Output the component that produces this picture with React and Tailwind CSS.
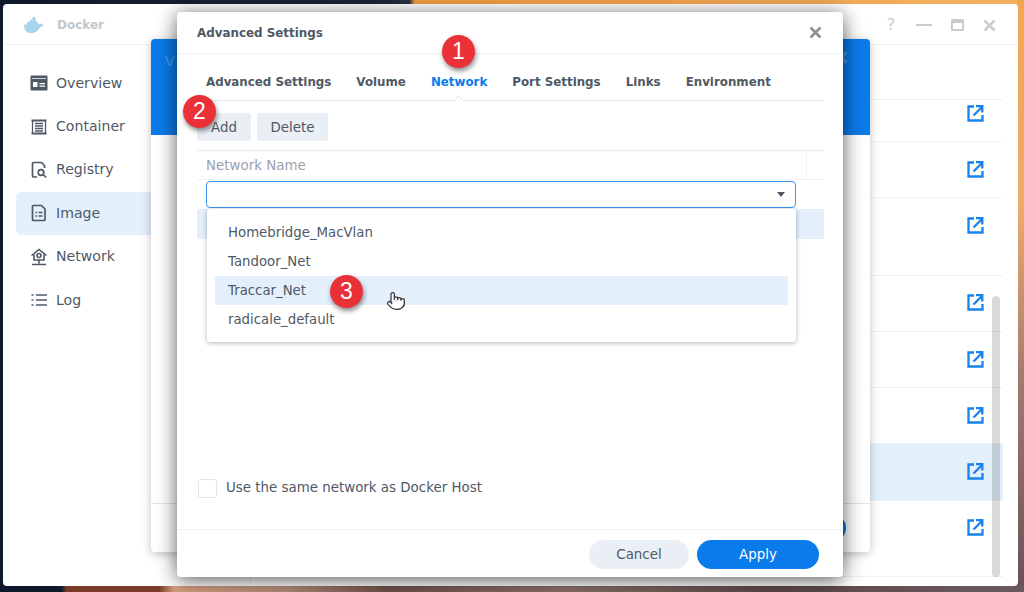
import React from "react";
import { Pointer } from "lucide-react";

const sidebarItems = [
  { label: "Overview", icon: "overview" },
  { label: "Container", icon: "container" },
  { label: "Registry", icon: "registry" },
  { label: "Image", icon: "image", active: true },
  { label: "Network", icon: "network" },
  { label: "Log", icon: "log" },
];

const rows = [
  { h: "h-[42px]", pt: "pt-[4px]" },
  { h: "h-[56px]", pt: "pt-[18px]" },
  { h: "h-[78px]", pt: "pt-[18px]" },
  { h: "h-[56px]", pt: "pt-[17px]" },
  { h: "h-[56px]", pt: "pt-[18px]" },
  { h: "h-[56px]", pt: "pt-[18px]" },
  { h: "h-[57px]", pt: "pt-[18px]", active: true },
  { h: "h-[76px]", pt: "pt-[17px]" },
];

const tabs = ["Advanced Settings", "Volume", "Network", "Port Settings", "Links", "Environment"];
const networks = ["Homebridge_MacVlan", "Tandoor_Net", "Traccar_Net", "radicale_default"];

const SideIcon = ({ name }) => {
  const common = { width: 20, height: 20, viewBox: "0 0 20 20", className: "text-[#4f5965] shrink-0" };
  if (name === "overview")
    return (
      <svg {...common}>
        <path
          fillRule="evenodd"
          fill="currentColor"
          d="M1.500 3.500a1 1 0 0 1 1-1h15a1 1 0 0 1 1 1v13a1 1 0 0 1-1 1h-15a1 1 0 0 1-1-1zM3 5v.8h14V5zM4 9v5h4.500V9zm6.500 1v1.200H16V10zm0 2.500v1.200H16v-1.200z"
        />
      </svg>
    );
  if (name === "container")
    return (
      <svg {...common} fill="none" stroke="currentColor" strokeWidth="1.300">
        <path strokeWidth="1.800" d="M2.500 3.500h15M2.500 16.500h15" />
        <path d="M3.500 3.500v13M16.500 3.500v13M6 6.500h8M6 9h8M6 11.500h8M6 14h8" />
      </svg>
    );
  if (name === "registry")
    return (
      <svg {...common} fill="none" stroke="currentColor" strokeWidth="1.700">
        <path d="M8 17H4.500a1 1 0 0 1-1-1V3.500a1 1 0 0 1 1-1h8l3 3V8" />
        <circle cx="12" cy="12.500" r="2.800" />
        <path d="m14.200 14.700 3 2.800" />
      </svg>
    );
  if (name === "image")
    return (
      <svg {...common} fill="none" stroke="currentColor" strokeWidth="1.700">
        <path d="M4.500 2.500h8l3.500 3.500v10.500a1 1 0 0 1-1 1H4.500a1 1 0 0 1-1-1v-13a1 1 0 0 1 1-1z" />
        <path strokeWidth="1.400" d="M6.500 9.500h1.500M9.500 9.500h4M6.500 13h1.500M9.500 13h4" />
      </svg>
    );
  if (name === "network")
    return (
      <svg {...common} fill="none" stroke="currentColor" strokeWidth="1.600">
        <path d="M2.500 8.500 10 2.500l7.500 6" />
        <path d="M5 7.500V13h10V7.500" />
        <circle cx="10" cy="8.500" r="2" />
        <path d="M10 13v3.500M3 17.500h14" />
      </svg>
    );
  return (
    <svg {...common} fill="none" stroke="currentColor" strokeWidth="1.700">
      <path d="M2.500 5h2M7 5h11M2.500 10h2M7 10h11M2.500 15h2M7 15h11" />
    </svg>
  );
};

const OpenIcon = () => (
  <svg width="17" height="18" viewBox="0 0 17 18" fill="none" stroke="#1883ee" strokeWidth="2.300">
    <path d="M7 2.500H1.500v14h14V11" />
    <path d="M6.500 11.500 14.500 3.500M9 2.200h6.300v6.300" />
  </svg>
);

const DockerLogo = () => (
  <svg width="22" height="18" viewBox="0 0 22 18" className="shrink-0">
    <path
      fill="#a9d4f0"
      d="M1 8.500h3V6h3V3.500h2.500V1h3v4l2 .5.500 2.500c2-1 3.500-.8 5.500 1-1 1.500-2 2-3.500 2.200C15.500 15.500 11 17.500 6.500 17 3 16.500 1 13 1 8.500z"
    />
  </svg>
);

const Badge = ({ n, className }) => (
  <div
    className={`absolute w-[33px] h-[33px] rounded-full bg-[#ea3138] text-white flex items-center justify-center text-[23px] shadow-[1px_3px_5px_rgba(0,0,0,0.45)] font-['Liberation_Sans',sans-serif] ${className}`}
  >
    {n}
  </div>
);

const CloseX = ({ className }) => (
  <svg width="13" height="13" viewBox="0 0 13 13" className={className} fill="none" stroke="currentColor" strokeWidth="2.600">
    <path d="m1.500 1.500 10 10M11.500 1.500l-10 10" />
  </svg>
);

const DockerWindow = () => (
  <div className="absolute left-[3px] top-[4px] w-[1015px] h-[582px] bg-white rounded-[4px] flex flex-col overflow-hidden">
    <div className="h-[41px] shrink-0 border-b border-[#eef2f6] flex items-center pl-[20px] pr-[22px] pt-[2px]">
      <DockerLogo />
      <span className="ml-[12px] text-[12px] font-bold text-[#c2c7cc]">Docker</span>
      <div className="ml-auto flex items-center gap-[17px] text-[#c9cdd2]">
        <span className="w-[16px] text-center text-[16px]">?</span>
        <span className="w-[16px] h-[2px] bg-[#c9cdd2]" />
        <span className="w-[13px] h-[12px] mx-[2px] border-2 border-t-[4px] border-[#c9cdd2] rounded-[1px]" />
        <CloseX />
      </div>
    </div>
    <div className="flex-1 flex min-h-0">
      <div className="w-[248px] shrink-0 border-r border-[#eef2f6] pt-[17px] pl-[13px] pr-[14px] flex flex-col gap-[1px]">
        {sidebarItems.map((item) => (
          <div
            key={item.label}
            className={`h-[42.400px] flex items-center gap-[7px] pl-[13px] rounded-[6px] text-[14.100px] text-[#4f5965] ${
              item.active ? "bg-[#e3effb]" : ""
            }`}
          >
            <SideIcon name={item.icon} />
            {item.label}
          </div>
        ))}
      </div>
      <div className="flex-1 pt-[54px] pr-[15px]">
        {rows.map((row, i) => (
          <div
            key={i}
            className={`${row.h} ${row.pt} border-t border-[#eef2f6] flex justify-end pr-[19px] ${
              row.active ? "bg-[#e3effb]" : ""
            }`}
          >
            <OpenIcon />
          </div>
        ))}
        <div className="border-t border-[#eef2f6]" />
      </div>
    </div>
    <div className="absolute left-[989px] top-[292px] w-[8px] h-[281px] rounded-full bg-black/15" />
  </div>
);

const BackDialog = () => (
  <div className="absolute left-[151px] top-[39px] w-[719px] h-[513px] bg-white rounded-[4px] shadow-[0_2px_10px_rgba(0,0,0,0.25)] flex flex-col overflow-hidden">
    <div className="h-[96px] shrink-0 bg-[#0a7bea] flex items-start justify-between pt-[12px] pl-[14px] pr-[22px] text-[14px] text-white/25">
      <span>V</span>
      <CloseX className="text-white/25" />
    </div>
    <div className="flex-1" />
    <div className="h-[49px] shrink-0 border-t border-[#dfe6ee] flex items-start justify-end pt-[10px] pr-[24px]">
      <div className="w-[40px] h-[28px] rounded-full bg-[#0a7bea]" />
    </div>
  </div>
);

const AdvancedDialog = () => (
  <div className="absolute left-[177px] top-[12px] w-[666px] h-[565px] bg-white rounded-[4px] shadow-[0_3px_20px_rgba(0,0,0,0.65)] flex flex-col text-[#4f5965]">
    <div className="h-[42px] shrink-0 border-b border-[#eef2f6] flex items-center justify-between pl-[20px] pr-[21px]">
      <span className="text-[11.900px] font-bold pt-[3px]">Advanced Settings</span>
      <CloseX className="text-[#8a929b]" />
    </div>
    <div className="px-[20px] flex-1 flex flex-col min-h-0">
      <div className="relative h-[47px] shrink-0 border-b border-[#e6ebf1] flex items-center gap-[25px] pl-[9px] mr-[-1px] text-[11.850px] font-bold pt-[11px]">
        {tabs.map((t) => (
          <span key={t} className={t === "Network" ? "text-[#0a7bea]" : ""}>
            {t}
          </span>
        ))}
        <span className="absolute left-[258px] top-[43px] w-[7px] h-[7px] rotate-45 bg-white border-l border-t border-[#e6ebf1]" />
      </div>
      <div className="pt-[12px] h-[50px] shrink-0 border-b border-[#e6ebf1] mr-[-1px] flex gap-[6px] text-[13.400px]">
        <div className="w-[54px] h-[28px] pt-[2px] rounded-[3px] bg-[#e9eff5] flex items-center justify-center">Add</div>
        <div className="w-[71px] h-[28px] pt-[2px] rounded-[3px] bg-[#e9eff5] flex items-center justify-center">Delete</div>
      </div>
      <div className="h-[29px] shrink-0 mr-[-1px] border-b border-[#eef2f6] flex text-[13.400px] text-[#9aa2ab]">
        <div className="flex-1 border-r border-[#eef2f6] pl-[9px] pt-[2px] flex items-center">Network Name</div>
        <div className="w-[17px]" />
      </div>
      <div className="relative mt-[1px] flex-1 min-h-0">
        <div className="ml-[9px] mr-[27px] h-[27px] rounded-[4px] border border-[#3b97f0] flex items-center justify-end pr-[10px]">
          <span className="w-0 h-0 border-x-[4.500px] border-x-transparent border-t-[5px] border-t-[#4f5965]" />
        </div>
        <div className="mt-[1px] mr-[-1px] h-[30px] bg-[#e3effb]" />
        <div className="absolute left-[10px] top-[28px] w-[589px] h-[133px] bg-white rounded-[3px] shadow-[0_1px_5px_rgba(0,0,0,0.3)] pt-[9px] px-[8px] text-[13.300px]">
          {networks.map((n) => (
            <div
              key={n}
              className={`h-[29px] flex items-center pl-[13px] rounded-[2px] ${n === "Traccar_Net" ? "bg-[#e3effb]" : ""}`}
            >
              {n}
            </div>
          ))}
        </div>
        <div className="absolute left-[1px] top-[297px] flex items-center gap-[9px] text-[13.400px]">
          <div className="w-[19px] h-[19px] rounded-[3px] border border-[#dfe6ee]" />
          Use the same network as Docker Host
        </div>
      </div>
    </div>
    <div className="h-[48px] shrink-0 border-t border-[#eef2f6] flex items-start justify-end gap-[8px] pt-[10px] pr-[24px] text-[13.400px]">
      <div className="w-[100px] h-[29px] pt-[1px] rounded-full bg-[#e9eff5] flex items-center justify-center">Cancel</div>
      <div className="w-[122px] h-[29px] pt-[1px] rounded-full bg-[#0a7bea] text-white flex items-center justify-center">Apply</div>
    </div>
  </div>
);

export default function App() {
  return (
    <div className="relative w-[1024px] h-[592px] overflow-hidden font-['DejaVu_Sans',sans-serif] [background:linear-gradient(to_right,#0e1a2c_0%,#0e1a2c_6%,#7a3a28_6.5%,#7a3a28_15.5%,#d8a080_17%,#b08a78_28%,#6e4f48_38%,#8a7068_55%,#5c4848_75%,#6a5a60_100%)_bottom/100%_7px_no-repeat,linear-gradient(to_bottom,#f2a64e_0%,#eeaa6a_35%,#a07870_65%,#6a5058_100%)_right/7px_100%_no-repeat,linear-gradient(to_right,#0e1a2c_0%,#1a2636_38%,#2a3442_40%,#f09a40_40.5%,#f4b060_100%)_top/100%_5px_no-repeat,#0e1a2c]">
      <DockerWindow />
      <BackDialog />
      <AdvancedDialog />
      <Badge n="1" className="left-[442px] top-[35px]" />
      <Badge n="2" className="left-[183px] top-[95px]" />
      <Badge n="3" className="left-[330px] top-[275px]" />
      <Pointer size={20} className="absolute left-[386px] top-[291px] text-[#333] fill-white" strokeWidth={1.500} />
    </div>
  );
}
